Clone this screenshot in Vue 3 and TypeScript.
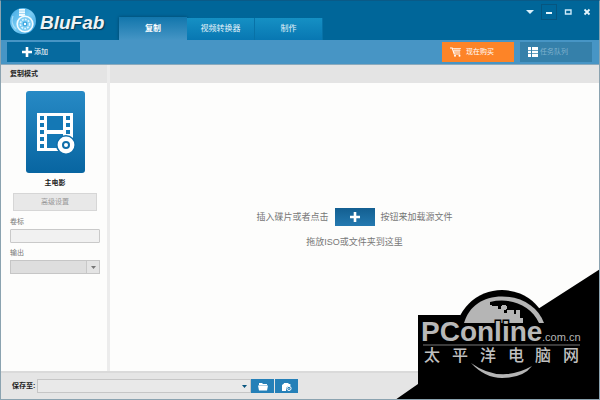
<script setup lang="ts">
import { ref } from 'vue'

const tabs: string[] = ['复制', '视频转换器', '制作']
const activeTab = ref<number>(0)
const volumeLabel = ref<string>('')
const brand: { char: string; x: number }[] = [
  { char: '太', x: 29 },
  { char: '平', x: 57 },
  { char: '洋', x: 85 },
  { char: '电', x: 113 },
  { char: '脑', x: 140 },
  { char: '网', x: 168 },
]
const holes: number[] = [5, 12, 19, 26, 33]
</script>

<template>
  <div class="window">
    <header class="titlebar">
      <div class="logo">
        <svg class="logo-mark" viewBox="0 0 26 26" aria-hidden="true">
          <defs>
            <linearGradient id="disc" x1="0" y1="0" x2="1" y2="1">
              <stop offset="0" stop-color="#3fa8e4" />
              <stop offset="0.5" stop-color="#7accf4" />
              <stop offset="1" stop-color="#2f9bda" />
            </linearGradient>
          </defs>
          <circle cx="13" cy="13" r="13" fill="url(#disc)" />
          <path d="M9 1h6v7h-6z" fill="#f2fbff" />
          <path d="M9 3h6M9 5.500h6" stroke="#7fcaf0" stroke-width="0.7" />
          <circle cx="15" cy="16" r="8.600" fill="#7ccdf4" />
          <circle cx="15" cy="16" r="7.800" fill="none" stroke="#f2fbff" stroke-width="1.600" />
          <circle cx="15" cy="16" r="4.600" fill="none" stroke="#dff4fe" stroke-width="1.600" stroke-dasharray="1.800 1.200" />
          <circle cx="15" cy="16" r="2.400" fill="#3ba4de" />
          <circle cx="15" cy="16" r="1.200" fill="#fff" />
          <path d="M3 8a11 11 0 0 0 3 13" fill="none" stroke="#a5ddf8" stroke-width="1.200" />
        </svg>
        <span class="logo-text">BluFab</span>
      </div>
      <nav class="tabs">
        <button
          v-for="(tab, i) in tabs"
          :key="tab"
          type="button"
          class="tab"
          :class="{ active: i === activeTab }"
          @click="activeTab = i"
        >{{ tab }}</button>
      </nav>
      <div class="controls">
        <button type="button" aria-label="菜单">
          <svg viewBox="0 0 14 14"><path d="M3 5h8l-4 4z" fill="#d9f0fb" /></svg>
        </button>
        <button type="button" class="framed" aria-label="最小化">
          <svg viewBox="0 0 14 14"><path d="M4 7h6v2H4z" fill="#e6f6fd" /></svg>
        </button>
        <button type="button" aria-label="最大化">
          <svg viewBox="0 0 14 14"><path d="M4.500 5h5.500v4H4.500z" fill="none" stroke="#cdeafa" stroke-width="1.400" /></svg>
        </button>
        <button type="button" aria-label="关闭">
          <svg viewBox="0 0 14 14"><path d="M4.500 4.500l5 5M9.500 4.500l-5 5" stroke="#e6f6fd" stroke-width="1.800" /></svg>
        </button>
      </div>
    </header>

    <div class="toolbar">
      <button type="button" class="add">
        <svg viewBox="0 0 10 10"><path d="M3.700 0h2.600v3.700H10v2.600H6.300V10H3.700V6.300H0V3.700h3.700z" fill="#fff" /></svg>
        添加
      </button>
      <button type="button" class="buy">
        <svg viewBox="0 0 12 10">
          <path d="M0 1h2.200l2 6h6" fill="none" stroke="#fff" stroke-width="1.100" />
          <path d="M3 1.500h8M3.400 3.300h7.200M4 5.100h6.200M5 1.500v4M7 1.500v4M9 1.500v4" fill="none" stroke="#fff" stroke-width="0.700" />
          <circle cx="5" cy="8.800" r="1" fill="#fff" /><circle cx="9.500" cy="8.800" r="1" fill="#fff" />
        </svg>
        现在购买
      </button>
      <button type="button" class="queue">
        <svg viewBox="0 0 10 10"><path d="M0 0h3v3H0zM4 0h6v3H4zM0 3.700h3v2.600H0zM4 3.700h6v2.600H4zM0 7h3v3H0zM4 7h6v3H4z" fill="#fff" /></svg>
        任务队列
      </button>
    </div>

    <main class="body">
      <aside class="sidebar">
        <h2 class="strip">复制模式</h2>
        <div class="panel">
          <button type="button" class="mode" aria-label="主电影">
            <svg viewBox="0 0 38 38">
              <path d="M1 0h36v38H1z" fill="#fff" />
              <path d="M11 3h16v14H11zM11 21h16v14H11z" fill="#1478b5" />
              <path v-for="y in holes" :key="y" :d="`M4 ${y - 2}h4v4h-4zM30 ${y - 2}h4v4h-4z`" fill="#1478b5" />
              <path d="M28 38v-6h10v8H28z" fill="#0f6eaa" />
              <circle cx="30" cy="32" r="10" fill="#0f6eaa" />
              <circle cx="30" cy="32" r="6.200" fill="none" stroke="#fff" stroke-width="4.400" />
              <circle cx="30" cy="32" r="2" fill="#fff" />
            </svg>
          </button>
          <p class="mode-name">主电影</p>
          <button type="button" class="advanced" disabled>高级设置</button>
          <label for="volume">卷标</label>
          <input id="volume" v-model="volumeLabel" type="text" />
          <label for="output">输出</label>
          <div class="select grey">
            <select id="output" disabled><option></option></select>
            <svg viewBox="0 0 5 3"><path d="M0 0h5L2.500 3z" fill="#777" /></svg>
          </div>
        </div>
      </aside>
      <section class="content">
        <div class="strip"></div>
        <div class="empty">
          <p class="hint">
            <span>插入碟片或者点击</span>
            <button type="button" class="plus" aria-label="添加">
              <svg viewBox="0 0 10 10"><path d="M3.700 0h2.600v3.700H10v2.600H6.300V10H3.700V6.300H0V3.700h3.700z" fill="#fff" /></svg>
            </button>
            <span>按钮来加载源文件</span>
          </p>
          <p class="hint">拖放ISO或文件夹到这里</p>
        </div>
      </section>
    </main>

    <footer class="footer">
      <label for="save">保存至:</label>
      <div class="select path">
        <select id="save"><option></option></select>
        <svg viewBox="0 0 5 3"><path d="M0 0h5L2.500 3z" fill="#08557f" /></svg>
      </div>
      <div class="folder-actions">
        <button type="button" aria-label="浏览">
          <svg viewBox="0 0 10 9"><path d="M1 1h3l1 1h4v1.200H1z" fill="#fff" /><path d="M0 3.600h10L9 8.600H1z" fill="#fff" /></svg>
        </button>
        <button type="button" aria-label="打开文件夹">
          <svg viewBox="0 0 10 9">
            <path d="M0 9V3l2-1.400V1h4l1 1h1.400v2H6L4 6v3z" fill="#fff" />
            <circle cx="7" cy="6.400" r="2.100" fill="none" stroke="#fff" stroke-width="1" />
            <path d="M6.400 7l1.200-1.200" stroke="#fff" stroke-width="0.800" />
          </svg>
        </button>
      </div>
    </footer>

    <svg class="watermark" viewBox="0 0 205 140" role="img" aria-label="PConline 太平洋电脑网">
      <path d="M0 140L23 124V55H65L107 72L205 9V140z" fill="#000" />
      <circle cx="107" cy="77" r="47" fill="#000" />
      <path d="M69 63C74 46 88 36.500 107 36.500C127 36.500 143 47 149 63z" fill="#b5b5b5" />
      <path d="M95 42C115 37 136 45 144 63H122V58H125V54H119V50H112V46H104V45H95z" fill="#000" />
      <path d="M97 43h9v6h-3v-3h-6zM109 49h4v4h-4z" fill="#000" />
      <path d="M107 45h4v5h-4zM112 50h5v4h-5zM117 54h5v4h-5zM121 50h4v4h-4zM115 58h13v5h-13z" fill="#b5b5b5" />
      <path d="M76 103Q105 124 137 106Q128 118 107 118Q90 118 76 103z" fill="#b5b5b5" />
      <text class="wm-name" x="26" y="81">PConline</text>
      <text class="wm-domain" x="147" y="81">.com.cn</text>
      <path d="M28 85h157" stroke="#777" stroke-width="1" />
      <text v-for="item in brand" :key="item.char" class="wm-cn" :x="item.x" y="101">{{ item.char }}</text>
    </svg>
  </div>
</template>

<style>
body {
  margin: 0;
}
</style>

<style scoped>
* {
  box-sizing: border-box;
}
.window {
  position: relative;
  display: flex;
  flex-direction: column;
  min-height: 100vh;
  border: 1px solid #8ba3b0;
  border-top-color: #0a5a87;
  background: #fdfdfc;
  font-family: "Liberation Sans", "Noto Sans CJK SC", sans-serif;
  font-size: 7px;
  line-height: 10px;
  color: #222;
  overflow: hidden;
}
button,
input,
select {
  margin: 0;
  padding: 0;
  border: 0;
  border-radius: 0;
  font: inherit;
  color: inherit;
  background: none;
}
h2,
p {
  margin: 0;
}
svg {
  display: block;
}
.titlebar {
  display: flex;
  height: 39px;
  background: #006699;
}
.logo {
  display: flex;
  align-items: center;
  gap: 4px;
  width: 118px;
  padding-left: 9px;
}
.logo-mark {
  width: 26px;
  height: 26px;
}
.logo-text {
  padding-top: 4px;
  font-size: 19px;
  font-weight: bold;
  font-style: italic;
  line-height: 24px;
  color: #eef3f6;
  text-shadow: 1px 1px 1px #04334e;
}
.tabs {
  display: flex;
  align-items: flex-end;
}
.tab {
  width: 68px;
  height: 22px;
  border-right: 1px solid #0872a7;
  background: linear-gradient(#1590c4, #0877b2);
  color: #e5f4fb;
  font-size: 8px;
}
.tab.active {
  height: 23px;
  border: 0;
  background: linear-gradient(#1276ac, #4595c5);
  box-shadow: 0 0 3px #034468;
  color: #fff;
  font-weight: bold;
}
.controls {
  display: flex;
  gap: 5px;
  margin-left: auto;
  padding: 4px 5px 0 0;
}
.controls button {
  width: 14px;
  height: 14px;
}
.controls svg {
  width: 14px;
  height: 14px;
}
.controls .framed {
  outline: 1px solid #07557f;
}
.toolbar {
  display: flex;
  align-items: center;
  gap: 6px;
  height: 25px;
  padding: 0 7px 1px 6px;
  border-bottom: 1px solid #8baabd;
  background: #4795c5;
}
.toolbar button {
  display: flex;
  align-items: center;
  height: 20px;
  color: #fff;
}
.toolbar .add {
  gap: 2px;
  width: 73px;
  margin-right: auto;
  padding-left: 15px;
  background: #066a9f;
}
.toolbar .buy {
  gap: 4px;
  width: 72px;
  padding-left: 8px;
  background: #fd8427;
}
.toolbar .queue {
  gap: 2px;
  width: 72px;
  padding-left: 8px;
  background: #3580aa;
  color: #7fb1cd;
}
.toolbar svg {
  width: 10px;
  height: 10px;
}
.toolbar .buy svg {
  width: 12px;
}
.body {
  display: flex;
  flex: 1;
}
.sidebar {
  display: flex;
  flex-direction: column;
  width: 109px;
  border-right: 3px solid #ececec;
}
.strip {
  height: 18px;
  padding: 4px 9px;
  background: #e4e4e4;
  font-size: 7px;
  font-weight: bold;
  line-height: 10px;
}
.panel {
  display: flex;
  flex-direction: column;
  padding: 8px 7px 0 9px;
}
.mode {
  display: flex;
  align-items: center;
  justify-content: center;
  align-self: center;
  width: 59px;
  height: 82px;
  border-radius: 3px;
  background: linear-gradient(#278ac5, #0865a1);
}
.mode svg {
  width: 38px;
  height: 38px;
  overflow: visible;
}
.mode-name {
  padding: 5px 0;
  font-weight: bold;
  text-align: center;
}
.advanced {
  height: 18px;
  margin: 0 3px 6px;
  border: 1px solid #d6d6d6;
  background: #e8e8e8;
  color: #989898;
}
.panel label {
  padding-bottom: 2px;
  color: #777;
}
.panel input {
  width: 100%;
  height: 14px;
  margin-bottom: 5px;
  padding: 0 4px;
  border: 1px solid #c9c9c9;
  border-radius: 1px;
  background: #f1f1f1;
}
.select {
  display: grid;
  grid-template-columns: 1fr 12px;
  align-items: center;
  justify-items: center;
  height: 14px;
  border: 1px solid #c6c6c6;
}
.select select {
  grid-area: 1 / 1 / 2 / 3;
  width: 100%;
  height: 12px;
  appearance: none;
}
.select svg {
  grid-area: 1 / 2;
  width: 5px;
  height: 3px;
  pointer-events: none;
}
.grey {
  background: linear-gradient(to left, #e4e4e4 12px, #c8c8c8 12px, #c8c8c8 13px, #dedede 13px);
}
.content {
  display: flex;
  flex: 1;
  flex-direction: column;
}
.empty {
  display: flex;
  flex: 1;
  flex-direction: column;
  align-items: center;
  justify-content: center;
  gap: 9px;
  padding-top: 3px;
}
.hint {
  display: flex;
  align-items: center;
  gap: 6px;
  color: #777;
  font-size: 9px;
  line-height: 14px;
}
.plus {
  display: flex;
  align-items: center;
  justify-content: center;
  width: 40px;
  height: 18px;
  background: linear-gradient(#135f91, #2479b0);
}
.plus svg {
  width: 10px;
  height: 10px;
}
.footer {
  display: flex;
  align-items: center;
  height: 28px;
  padding: 0 11px;
  border-top: 2px solid #dadada;
  background: #e5e5e5;
}
.footer label {
  width: 25px;
  font-weight: bold;
  white-space: nowrap;
}
.path {
  flex: 0 1 214px;
  background: #e9e9e9;
}
.folder-actions {
  display: flex;
  gap: 1px;
}
.folder-actions button {
  display: flex;
  align-items: center;
  justify-content: center;
  width: 23px;
  height: 14px;
  background: #2580b8;
}
.folder-actions svg {
  width: 10px;
  height: 9px;
}
.watermark {
  position: absolute;
  right: -1px;
  bottom: -1px;
  width: 205px;
  height: 140px;
}
.wm-name {
  fill: #b8b8b8;
  stroke: #000;
  stroke-width: 3px;
  paint-order: stroke;
  font-size: 28px;
  font-weight: bold;
}
.wm-domain {
  fill: #b5b5b5;
  font-size: 11px;
}
.wm-cn {
  fill: #c0c0c0;
  font-size: 16px;
  font-weight: 500;
}
</style>
